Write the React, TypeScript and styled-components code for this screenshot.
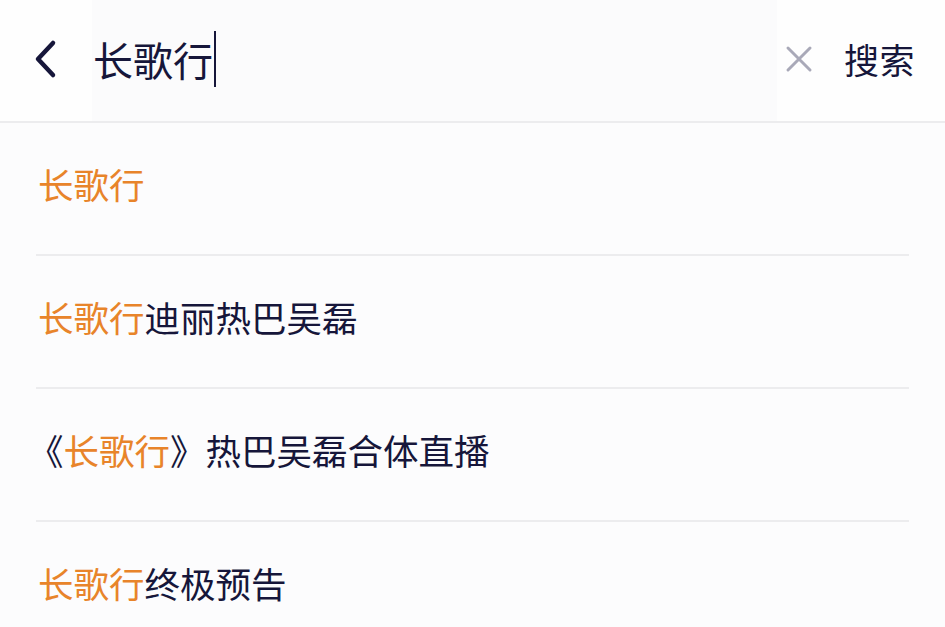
import styled, { createGlobalStyle } from 'styled-components'

const GlobalStyle = createGlobalStyle`
  html, body {
    margin: 0;
    padding: 0;
    background: #fcfcfd;
    font-family: "Noto Sans CJK SC", "Noto Sans", sans-serif;
  }
`

const suggestions = [
  { open: false, hit: '长歌行', post: '' },
  { open: false, hit: '长歌行', post: '迪丽热巴吴磊' },
  { open: true, hit: '长歌行', post: '热巴吴磊合体直播' },
  { open: false, hit: '长歌行', post: '终极预告' },
]

const App = () => {
  return (
    <>
      <GlobalStyle />
      <Page>
        <Header>
          <BackButton aria-label="back">
            <svg width="28" height="40" viewBox="0 0 28 40">
              <path d="M21 4 L6 20 L21 36" fill="none" stroke="#16163a" strokeWidth="4.5" strokeLinecap="round" strokeLinejoin="round" />
            </svg>
          </BackButton>
          <InputBox>
            <InputText>长歌行</InputText>
            <Caret />
          </InputBox>
          <ClearButton aria-label="clear">
            <svg width="28" height="28" viewBox="0 0 28 28">
              <path d="M3 3 L25 25 M25 3 L3 25" stroke="#a9a9b8" strokeWidth="3" strokeLinecap="round" />
            </svg>
          </ClearButton>
          <SearchButton>搜索</SearchButton>
        </Header>
        <List>
          {suggestions.map((s, i) => (
            <Item key={i}>
              {s.open && <OpenBracket>《</OpenBracket>}
              <Hit>{s.hit}</Hit>
              {s.open && '》'}
              {s.post}
            </Item>
          ))}
        </List>
      </Page>
    </>
  )
}

export default App

const Page = styled.div`
  width: 945px;
  height: 627px;
  overflow: hidden;
  background: #fcfcfd;
`
const Header = styled.div`
  height: 123px;
  display: flex;
  align-items: center;
  background: #fefefe;
  border-bottom: 2px solid #ececee;
  box-sizing: border-box;
`
const BackButton = styled.div`
  width: 60px;
  margin-left: 32px;
  margin-bottom: 4px;
  display: flex;
  align-items: center;
`
const InputBox = styled.div`
  flex: 1;
  height: 121px;
  display: flex;
  align-items: center;
  padding-left: 1px;
  padding-bottom: 4px;
  box-sizing: border-box;
  background: #fbfbfc;
`
const InputText = styled.span`
  font-size: 40px;
  color: #16163a;
`
const Caret = styled.span`
  width: 2px;
  height: 56px;
  background: #16163a;
  margin-left: 1px;
`
const ClearButton = styled.div`
  width: 30px;
  display: flex;
  align-items: center;
  margin-left: 8px;
  margin-right: 29px;
  margin-bottom: 4px;
`
const SearchButton = styled.span`
  font-size: 35px;
  color: #16163a;
  margin-right: 30px;
  margin-bottom: 4px;
  letter-spacing: 0.5px;
`
const List = styled.div`
  padding: 0 36px;
`
const Item = styled.div`
  height: 133px;
  display: flex;
  align-items: center;
  padding-left: 2px;
  padding-bottom: 10px;
  font-size: 35.5px;
  color: #16163a;
  border-bottom: 2px solid #ececee;
  box-sizing: border-box;
  white-space: pre;
`
const OpenBracket = styled.span`
  margin-left: -10px;
`
const Hit = styled.span`
  color: #e8842a;
`
